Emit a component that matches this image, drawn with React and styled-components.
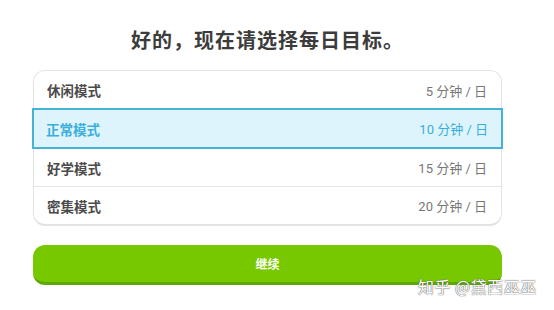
import React from "react";
import styled, { createGlobalStyle } from "styled-components";

const Global = createGlobalStyle`
  html, body { margin: 0; padding: 0; background: #fff; }
  body { font-family: Roboto, "Noto Sans CJK SC", sans-serif; }
  * { box-sizing: border-box; }
`;

const Page = styled.div`
  position: relative;
  width: 554px;
  height: 310px;
  padding: 28px 52px 0 33px;
  display: flex;
  flex-direction: column;
  overflow: hidden;
`;

const Title = styled.h1`
  margin: 0 0 18px 0;
  height: 24px;
  line-height: 24px;
  font-size: 20px;
  font-weight: 700;
  color: #3c3c3c;
  text-align: center;
  font-family: "Noto Sans CJK SC", sans-serif;
  letter-spacing: 1px;
`;

const Card = styled.div`
  width: 469px;
  border: 1px solid #e3e3e3;
  border-bottom-width: 2px;
  border-radius: 12px;
  display: flex;
  flex-direction: column;
`;

const Row = styled.div`
  height: ${(p) => (p.$selected ? "41px" : "38px")};
  margin: ${(p) => (p.$selected ? "-1px -2px -1px -2px" : "0")};
  padding: 0 ${(p) => (p.$selected ? "13px 0 12px" : "14px 0 13px")};
  display: flex;
  align-items: center;
  justify-content: space-between;
  border-top: ${(p) => (p.$first ? "none" : "1px solid #e5e5e5")};
  background: ${(p) => (p.$selected ? "#ddf4fc" : "transparent")};
  ${(p) => p.$selected && "border: 2px solid #45b3d3; position: relative; z-index: 1;"}
  color: ${(p) => (p.$selected ? "#3aaedc" : "#4b4b4b")};
`;

const Name = styled.span`
  font-size: 13.5px;
  font-weight: 700;
  font-family: "Noto Sans CJK SC", sans-serif;
`;

const Goal = styled.span`
  font-size: 13px;
  font-weight: 400;
  color: ${(p) => (p.$selected ? "#3aaedc" : "#777")};
  font-family: Roboto, "Noto Sans CJK SC", sans-serif;
`;

const Button = styled.button`
  margin-top: 19px;
  width: 469px;
  height: 40px;
  border: none;
  border-bottom: 3px solid #5aa800;
  border-radius: 12px;
  background: #78c800;
  color: #fff;
  font-size: 12px;
  font-weight: 700;
  font-family: "Noto Sans CJK SC", sans-serif;
  padding: 0;
`;

const Watermark = styled.div`
  position: absolute;
  left: 418px;
  top: 274px;
  font-size: 16px;
  color: #fff;
  font-family: "Noto Sans CJK SC", sans-serif;
  text-shadow: 0 0 1px #555, 0 0 1px #555;
  letter-spacing: 0.5px;
  white-space: nowrap;
`;

const goals = [
  { name: "休闲模式", min: 5 },
  { name: "正常模式", min: 10, selected: true },
  { name: "好学模式", min: 15 },
  { name: "密集模式", min: 20 },
];

export default function App() {
  return (
    <>
      <Global />
      <Page>
        <Title>好的，现在请选择每日目标。</Title>
        <Card>
          {goals.map((g, i) => (
            <Row key={g.name} $first={i === 0} $selected={g.selected}>
              <Name>{g.name}</Name>
              <Goal $selected={g.selected}>{g.min} 分钟 / 日</Goal>
            </Row>
          ))}
        </Card>
        <Button>继续</Button>
        <Watermark>知乎 @黛西巫巫</Watermark>
      </Page>
    </>
  );
}
